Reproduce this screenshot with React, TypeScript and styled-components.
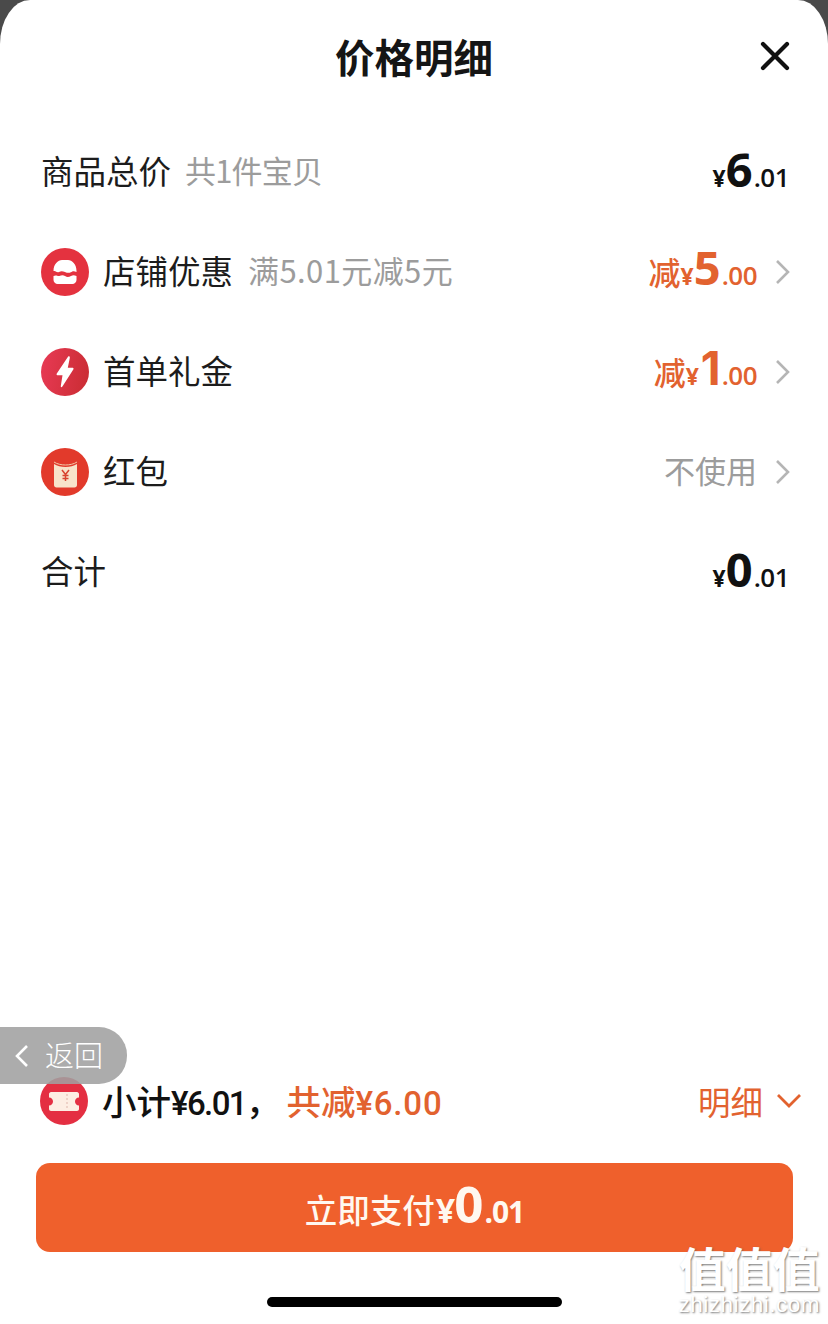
import React from 'react';
import styled, { createGlobalStyle } from 'styled-components';

const orange = '#e2622f';

const GlobalStyle = createGlobalStyle`
	html, body {
		margin: 0;
		padding: 0;
		background: #4a4a4a;
	}
	body {
		font-family: "Noto Sans CJK SC", "Noto Sans", sans-serif;
	}
`;

const Sheet = styled.div`
	position: relative;
	width: 828px;
	height: 1324px;
	overflow: hidden;
	background: #fff;
	border-radius: 30px 30px 0 0 / 44px 44px 0 0;
	display: flex;
	flex-direction: column;
`;

const Header = styled.header`
	position: relative;
	height: 122px;
	flex-shrink: 0;
	display: flex;
	justify-content: center;
	padding-top: 28px;
	box-sizing: border-box;
`;

const Title = styled.h1`
	margin: 0;
	font-size: 39.5px;
	line-height: 56px;
	font-weight: 700;
	color: #151515;
`;

const CloseButton = styled.button`
	position: absolute;
	top: 40px;
	right: 37px;
	width: 32px;
	height: 32px;
	padding: 0;
	border: none;
	background: none;
	display: flex;
`;

const List = styled.div`
	display: flex;
	flex-direction: column;
	padding: 0 37px 0 41px;
`;

const Row = styled.div`
	height: 100px;
	display: flex;
	align-items: center;
`;

const IconCircle = styled.span<{ $bg: string }>`
	width: 48px;
	height: 48px;
	border-radius: 50%;
	background: ${(props) => props.$bg};
	margin-right: 14px;
	flex-shrink: 0;
	display: flex;
	align-items: center;
	justify-content: center;
`;

const Label = styled.span`
	font-size: 32.5px;
	line-height: 44px;
	padding-bottom: 4px;
	color: #1c1c1c;
`;

const Note = styled.span<{ $spacing: number; $gap: number }>`
	font-size: 31px;
	line-height: 44px;
	padding-bottom: 4px;
	letter-spacing: ${(props) => props.$spacing}px;
	color: #9c9c9c;
	margin-left: ${(props) => props.$gap}px;
`;

const Right = styled.div`
	margin-left: auto;
	display: flex;
	align-items: center;
`;

const PlainRight = styled(Right)`
	margin-right: 2px;
`;

const Amount = styled.div<{ $color: string; $lift: number }>`
	display: flex;
	align-items: baseline;
	padding-bottom: ${(props) => props.$lift}px;
	color: ${(props) => props.$color};
	font-family: "Open Sans", "Noto Sans CJK SC", sans-serif;
	font-weight: 600;
`;

const AmountPrefix = styled.span`
	font-family: "Noto Sans CJK SC", sans-serif;
	font-size: 32px;
	font-weight: 500;
	line-height: 44px;
`;

const Yen = styled.span`
	font-size: 23px;
	font-weight: 700;
	margin-right: 2px;
`;

const Whole = styled.span`
	font-size: 47px;
	font-weight: 700;
	line-height: 44px;
	margin-left: -2px;
`;

const NarrowWhole = styled.span`
	font-family: "Inter", sans-serif;
	font-size: 46px;
	font-weight: 700;
	line-height: 44px;
`;

const Cents = styled.span`
	font-size: 26px;
	letter-spacing: -0.5px;
	margin-left: 1px;
`;

const Unused = styled.span`
	font-size: 31px;
	line-height: 44px;
	padding-bottom: 4px;
	color: #9c9c9c;
`;

const Chevron = styled.svg`
	width: 16px;
	height: 26px;
	margin-left: 18px;
`;

const Spacer = styled.div`
	flex: 1;
`;

const Summary = styled.div`
	display: flex;
	align-items: center;
	padding: 0 26px 0 40px;
	height: 50px;
	margin-bottom: 37px;
`;

const SummaryText = styled.span`
	font-size: 34.5px;
	line-height: 48px;
	padding-top: 2px;
	font-weight: 500;
	color: #111;
`;

const Figures = styled.span<{ $spacing: number }>`
	font-family: "Roboto", sans-serif;
	font-size: 33px;
	letter-spacing: ${(props) => props.$spacing}px;
`;

const SummarySaved = styled.span`
	font-size: 34.5px;
	line-height: 48px;
	padding-top: 2px;
	font-weight: 500;
	color: ${orange};
	margin-left: 6px;
`;

const DetailToggle = styled.div`
	margin-left: auto;
	display: flex;
	align-items: center;
	gap: 13px;
	font-size: 32.5px;
	line-height: 44px;
	color: ${orange};
`;

const PayButton = styled.button`
	display: flex;
	align-items: baseline;
	justify-content: center;
	width: 757px;
	height: 89px;
	margin: 0 0 0 36px;
	padding: 15px 0 0;
	box-sizing: border-box;
	border: none;
	border-radius: 14px;
	background: #ef602c;
	color: #fff8f0;
	font-family: "Noto Sans CJK SC", sans-serif;
	font-size: 32.5px;
	font-weight: 500;
	line-height: 60px;
`;

const PayYen = styled.span`
	font-family: "Open Sans", sans-serif;
	font-size: 34px;
	font-weight: 700;
	margin-left: 1px;
`;

const PayWhole = styled.span`
	font-family: "Open Sans", sans-serif;
	font-size: 51px;
	font-weight: 700;
	line-height: 50px;
	margin-left: -1px;
`;

const PayCents = styled.span`
	font-family: "Open Sans", sans-serif;
	font-size: 30px;
	font-weight: 700;
	letter-spacing: -1px;
	margin-left: 1px;
`;

const HomeArea = styled.div`
	height: 72px;
	padding-top: 45px;
	box-sizing: border-box;
	display: flex;
	justify-content: center;
	flex-shrink: 0;
`;

const HomeBar = styled.div`
	width: 295px;
	height: 10px;
	border-radius: 5px;
	background: #000;
`;

const BackPill = styled.div`
	position: absolute;
	left: 0;
	top: 1027px;
	width: 127px;
	height: 57px;
	border-radius: 0 28px 28px 0;
	background: rgba(160, 160, 160, 0.88);
	display: flex;
	align-items: center;
	padding-left: 15px;
	box-sizing: border-box;
	gap: 16px;
	color: #fff;
	font-size: 29px;
	font-weight: 300;
`;

const BackText = styled.span`
	line-height: 40px;
	padding-bottom: 4px;
`;

const Watermark = styled.div`
	position: absolute;
	right: 8px;
	bottom: 9px;
	display: flex;
	flex-direction: column;
	align-items: center;
	gap: 5px;
	color: #fff;
	text-shadow: 1px 1px 2px rgba(90, 90, 90, 0.8);
`;

const WatermarkMark = styled.span`
	font-size: 47px;
	line-height: 47px;
	font-weight: 700;
`;

const WatermarkSite = styled.span`
	font-family: "Liberation Sans", sans-serif;
	font-size: 22.5px;
	line-height: 20px;
	letter-spacing: 0.5px;
`;

const ChevronRight = () => (
	<Chevron viewBox="0 0 16 26" fill="none">
		<path d="M2 2l11 11L2 24" stroke="#b5b5b5" strokeWidth="2.6" />
	</Chevron>
);

interface PriceProps {
	prefix?: string;
	whole: string;
	cents: string;
	color: string;
}

const Price = ({ prefix, whole, cents, color }: PriceProps) => (
	<Amount $color={color} $lift={prefix ? 6 : 3}>
		{prefix && <AmountPrefix>{prefix}</AmountPrefix>}
		<Yen>¥</Yen>
		{whole === '1' ? <NarrowWhole>{whole}</NarrowWhole> : <Whole>{whole}</Whole>}
		<Cents>.{cents}</Cents>
	</Amount>
);

const App = () => {
	return (
		<>
			<GlobalStyle />
			<Sheet>
				<Header>
					<Title>价格明细</Title>
					<CloseButton aria-label="关闭">
						<svg width="32" height="32" viewBox="0 0 32 32" fill="none">
							<path d="M4 4l24 24M28 4L4 28" stroke="#111" strokeWidth="4.2" strokeLinecap="round" />
						</svg>
					</CloseButton>
				</Header>

				<List>
					<Row>
						<Label>商品总价</Label>
						<Note $spacing={-0.8} $gap={14}>共1件宝贝</Note>
						<PlainRight>
							<Price whole="6" cents="01" color="#111" />
						</PlainRight>
					</Row>
					<Row>
						<IconCircle $bg="#e4323f">
							<svg width="26" height="26" viewBox="0 0 26 26" fill="none">
								<path d="M1.500 12C1.500 5 6 1 10 1h6c4 0 8.500 4 8.500 11v1c-3-1.500-4-.5-5.700.3s-3 .8-5.800-.3-4-1-6 0-3-1-4.500-1z" fill="#fff" />
								<path d="M1.500 17c3-1.500 4 .5 5.800 0s3.500-1.500 5.700 0 4 1 6 0 3-1 5.500 0v4c0 2-2 4-4 4h-15c-2 0-4-2-4-4z" fill="#fff" />
							</svg>
						</IconCircle>
						<Label>店铺优惠</Label>
						<Note $spacing={0.4} $gap={15}>满5.01元减5元</Note>
						<Right>
							<Price prefix="减" whole="5" cents="00" color={orange} />
							<ChevronRight />
						</Right>
					</Row>
					<Row>
						<IconCircle $bg="linear-gradient(100deg, #e83a55, #c92c32)">
							<svg width="18" height="32" viewBox="0 0 18 32" fill="none">
								<path d="M12 .800L.800 17.500c-.6 1 0 1.800 1 1.800h4.700L4.800 30c-.2 1.500.8 1.700 1.600.6L17.300 13.500c.6-1 0-1.800-1-1.800h-4.500l2-9.800c.2-1.500-1-2-1.800-1.100z" fill="#fff" />
							</svg>
						</IconCircle>
						<Label>首单礼金</Label>
						<Right>
							<Price prefix="减" whole="1" cents="00" color={orange} />
							<ChevronRight />
						</Right>
					</Row>
					<Row>
						<IconCircle $bg="#e23a2b">
							<svg width="25" height="31" viewBox="0 0 25 31" fill="none">
								<path d="M1 7c6 4 17 4 23 0v21c0 1.500-1 2.500-2.500 2.500h-18C2 30.500 1 29.500 1 28z" fill="#f8e3ca" />
								<path d="M1 5c6 4 17 4 23 0" stroke="#f3c9a8" strokeWidth="1" />
								<path d="M9 13l3.500 4.500L16 13M12.500 17.500v6.500M9.500 18.500h6M9.500 21.500h6" stroke="#d8432f" strokeWidth="1.500" />
							</svg>
						</IconCircle>
						<Label>红包</Label>
						<Right>
							<Unused>不使用</Unused>
							<ChevronRight />
						</Right>
					</Row>
					<Row>
						<Label>合计</Label>
						<PlainRight>
							<Price whole="0" cents="01" color="#111" />
						</PlainRight>
					</Row>
				</List>

				<Spacer />

				<Summary>
					<IconCircle $bg="#e42f42">
						<svg width="30" height="19" viewBox="0 0 30 19" fill="none">
							<path d="M2 0h26c1 0 2 1 2 2v3.500c-2.500 0-4 1.800-4 4s1.500 4 4 4V17c0 1-1 2-2 2H2c-1 0-2-1-2-2v-3.500c2.500 0 4-1.800 4-4s-1.500-4-4-4V2C0 1 1 0 2 0z" fill="#fdeee3" />
							<path d="M18 2v15" stroke="#e9c9be" strokeWidth="1.500" strokeDasharray="2 2" />
						</svg>
					</IconCircle>
					<SummaryText>小计<Figures $spacing={-1.6}>¥6.01</Figures>，</SummaryText>
					<SummarySaved>共减<Figures $spacing={0.8}>¥6.00</Figures></SummarySaved>
					<DetailToggle>
						明细
						<svg width="26" height="16" viewBox="0 0 26 16" fill="none">
							<path d="M2 2l11 11L24 2" stroke={orange} strokeWidth="2.800" />
						</svg>
					</DetailToggle>
				</Summary>

				<PayButton>
					立即支付
					<PayYen>¥</PayYen>
					<PayWhole>0</PayWhole>
					<PayCents>.01</PayCents>
				</PayButton>

				<HomeArea>
					<HomeBar />
				</HomeArea>

				<BackPill>
					<svg width="14" height="24" viewBox="0 0 14 24" fill="none">
						<path d="M12 2L2 12l10 10" stroke="#fff" strokeWidth="2.600" />
					</svg>
					<BackText>返回</BackText>
				</BackPill>

				<Watermark>
					<WatermarkMark>值值值</WatermarkMark>
					<WatermarkSite>zhizhizhi.com</WatermarkSite>
				</Watermark>
			</Sheet>
		</>
	);
};

export default App;
